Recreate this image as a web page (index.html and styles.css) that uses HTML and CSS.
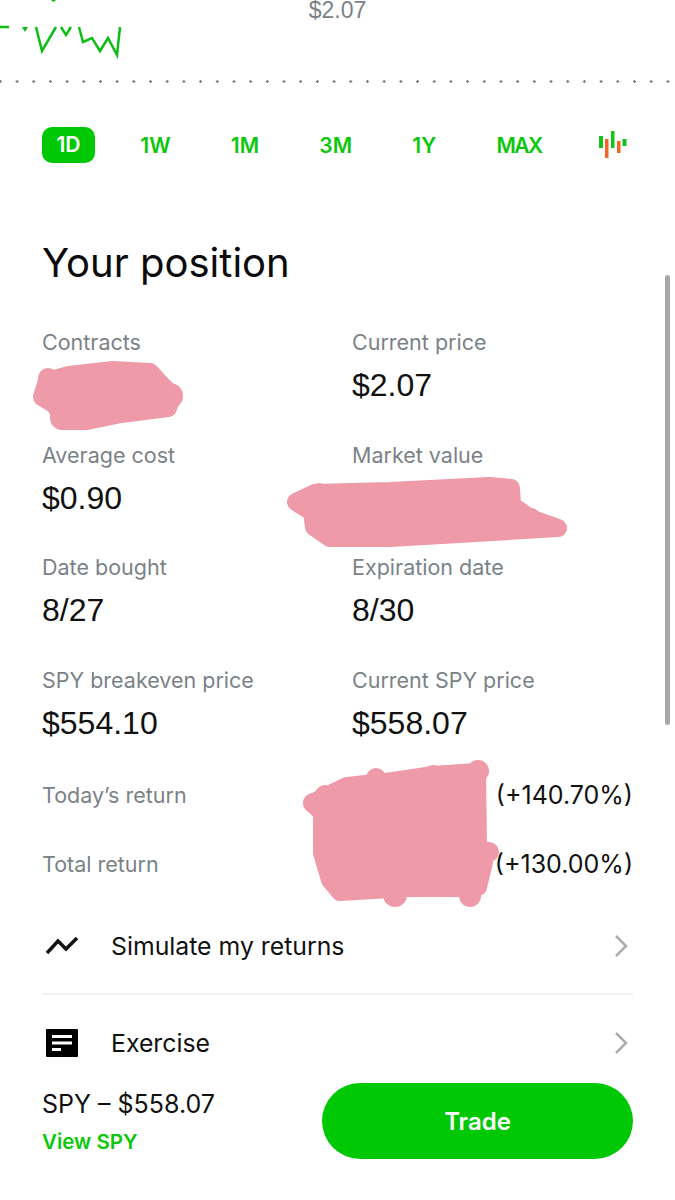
FILE: index.html
```html
<!DOCTYPE html>
<html lang="en">
<head>
    <meta charset="UTF-8">
    <meta name="viewport" content="width=device-width, initial-scale=1.0">
    <title>Your position</title>
    <link rel="stylesheet" href="styles.css">
</head>
<body>
    <div class="chart-top">
        <svg class="chart" width="130" height="60" viewBox="0 0 130 60">
            <path class="chart-line" d="M0 27H9M36 27L42 51L56 27M61 27L66 35L71 27M79 27L83 42L92 38L100 51L108 38L117 55L120 27"/>
            <path class="chart-dot" d="M22 27H28L25 32ZM51 0H56L53.500 2Z"/>
        </svg>
        <div class="chart-price">$2.07</div>
    </div>
    <div class="dots"></div>

    <div class="periods">
        <span class="period active">1D</span>
        <span class="period">1W</span>
        <span class="period">1M</span>
        <span class="period">3M</span>
        <span class="period">1Y</span>
        <span class="period max">MAX</span>
        <svg width="28" height="28" viewBox="0 0 28 28">
            <rect class="bar-green" x="0" y="5" width="4" height="12"/>
            <rect class="bar-orange" x="6" y="8" width="3.500" height="19"/>
            <rect class="bar-green" x="12" y="0" width="3.500" height="17"/>
            <rect class="bar-orange" x="18" y="10" width="3.500" height="12"/>
            <rect class="bar-green" x="23.500" y="8" width="4" height="7"/>
        </svg>
    </div>

    <h1 class="title">Your position</h1>

    <div class="stats">
        <div class="stat">
            <div class="stat-label">Contracts</div>
            <div class="stat-value"></div>
        </div>
        <div class="stat">
            <div class="stat-label">Current price</div>
            <div class="stat-value">$2.07</div>
        </div>
        <div class="stat">
            <div class="stat-label">Average cost</div>
            <div class="stat-value">$0.90</div>
        </div>
        <div class="stat">
            <div class="stat-label">Market value</div>
            <div class="stat-value"></div>
        </div>
        <div class="stat">
            <div class="stat-label">Date bought</div>
            <div class="stat-value">8/27</div>
        </div>
        <div class="stat">
            <div class="stat-label">Expiration date</div>
            <div class="stat-value">8/30</div>
        </div>
        <div class="stat">
            <div class="stat-label">SPY breakeven price</div>
            <div class="stat-value">$554.10</div>
        </div>
        <div class="stat">
            <div class="stat-label">Current SPY price</div>
            <div class="stat-value">$558.07</div>
        </div>
    </div>

    <div class="returns">
        <div class="return-row">
            <span class="stat-label">Today’s return</span>
            <span class="return-value">(+140.70%)</span>
        </div>
        <div class="return-row">
            <span class="stat-label">Total return</span>
            <span class="return-value">(+130.00%)</span>
        </div>
    </div>

    <div class="menu">
        <div class="menu-row divided">
            <svg class="menu-icon" width="34" height="20" viewBox="0 0 34 20">
                <path class="icon-line" d="M2 17L13 5L21 13L32 2"/>
            </svg>
            <span class="menu-text">Simulate my returns</span>
            <svg class="chevron" width="14" height="22" viewBox="0 0 14 22">
                <path d="M2 1L12 11L2 21"/>
            </svg>
        </div>
        <div class="menu-row last">
            <svg class="menu-icon" width="34" height="28" viewBox="0 0 34 28">
                <rect x="1" y="0" width="32" height="28" rx="1"/>
                <rect class="icon-cut" x="7" y="6" width="20" height="3"/>
                <rect class="icon-cut" x="7" y="12.500" width="20" height="3"/>
                <rect class="icon-cut" x="7" y="19" width="9" height="3"/>
            </svg>
            <span class="menu-text">Exercise</span>
            <svg class="chevron" width="14" height="22" viewBox="0 0 14 22">
                <path d="M2 1L12 11L2 21"/>
            </svg>
        </div>
    </div>

    <div class="footer">
        <div class="footer-info">
            <div class="footer-price">SPY – $558.07</div>
            <div class="footer-link">View SPY</div>
        </div>
        <button class="trade">Trade</button>
    </div>

    <div class="scrollbar"></div>

    <!-- hand drawn redactions on top of the screenshot -->
    <svg class="scribbles" width="675" height="1200" viewBox="0 0 675 1200">
        <path d="M47 381L69 375L113 370L150 372L162 385L172 395L168 408L121 414L87 421L64 421L55 405L42 397Z"/>
        <circle cx="62" cy="418" r="12"/>
        <circle cx="48" cy="378" r="10"/>
        <circle cx="170" cy="396" r="13"/>
        <path d="M296 502L315 493L390 491L489 486L511 488L512 505L530 518L558 528L476 533L390 538L330 538L314 527L312 512Z"/>
        <circle cx="319" cy="493" r="10"/>
        <circle cx="531" cy="518" r="10"/>
        <path d="M312 803L328 795L347 786L393 781L433 775L477 772L478 842L484 862L478 887L460 888L407 888L340 892L330 880L322 853L322 813Z"/>
        <circle cx="313" cy="803" r="10"/>
        <circle cx="325" cy="795" r="10"/>
        <circle cx="376" cy="778" r="10"/>
        <circle cx="433" cy="775" r="10"/>
        <circle cx="478" cy="771" r="11"/>
        <circle cx="489" cy="852" r="10"/>
        <circle cx="395" cy="895" r="12"/>
        <circle cx="470" cy="896" r="11"/>
    </svg>
</body>
</html>
```

FILE: styles.css
```css
* {
    box-sizing: border-box;
}
body {
    font-family: Inter, "Liberation Sans", sans-serif;
    position: relative;
    width: 675px;
    height: 1200px;
    margin: 0;
    overflow: hidden;
    background-color: white;
    color: #111;
}
.chart-top {
    display: grid;
    grid-template-columns: 1fr auto 1fr;
    height: 80px;
}
.chart-line {
    fill: none;
    stroke: #0dbf14;
    stroke-width: 2.500;
}
.chart-dot {
    fill: #0dbf14;
}
.chart-price {
    font-family: "Liberation Sans", sans-serif;
    font-size: 23px;
    line-height: 21px;
    color: #7b8287;
}
.dots {
    height: 3px;
    background-image: radial-gradient(circle, #777 1px, transparent 1.500px);
    background-size: 16.700px 3px;
    background-position: -8px 0;
}
.periods {
    display: flex;
    align-items: center;
    justify-content: space-between;
    height: 36px;
    margin-top: 44px;
    padding: 0 48px 0 42px;
}
.period {
    font-size: 21px;
    font-weight: 600;
    color: #0cc70c;
}
.period.max {
    margin-right: -3px;
    letter-spacing: -1.500px;
}
.period.active {
    margin-right: -15px;
    width: 53px;
    height: 36px;
    line-height: 36px;
    text-align: center;
    border-radius: 10px;
    background-color: #00c805;
    color: white;
}
.bar-green {
    fill: #12c41a;
}
.bar-orange {
    fill: #f0652a;
}
.title {
    height: 46px;
    margin: 77px 0 0 42px;
    font-size: 40px;
    line-height: 46px;
    font-weight: 400;
    color: #0b0b0b;
}
.stats {
    display: grid;
    grid-template-columns: 310px 1fr;
    row-gap: 33.700px;
    margin: 42px 0 0 42px;
}
.stat-label {
    font-size: 21.500px;
    line-height: 28px;
    color: #7b8287;
}
.stat-value {
    height: 43px;
    margin-top: 8px;
    font-family: "Liberation Sans", sans-serif;
    font-size: 32px;
    line-height: 43px;
}
.returns {
    display: flex;
    flex-direction: column;
    gap: 39px;
    margin: 35px 42px 0;
}
.return-row {
    display: flex;
    justify-content: space-between;
    height: 30px;
    line-height: 30px;
}
.return-row .stat-label {
    line-height: 30px;
}
.return-value {
    font-size: 25px;
    line-height: 30px;
}
.menu {
    margin: 19px 42px 0;
}
.menu-row {
    display: flex;
    align-items: center;
    height: 96px;
    padding: 20px 0;
}
.menu-row.divided {
    height: 97px;
    border-bottom: 2px solid #f1f2f3;
}
.menu-row.last {
    height: 76px;
    padding-bottom: 0;
}
.menu-icon {
    flex: none;
    margin: 0 32px 0 3px;
}
.icon-line {
    fill: none;
    stroke: #111;
    stroke-width: 3.500;
}
.icon-cut {
    fill: white;
}
.menu-text {
    flex: 1;
    font-size: 24.800px;
}
.chevron {
    margin-right: 5px;
    fill: none;
    stroke: #a9aeb2;
    stroke-width: 2.500;
}
.footer {
    display: flex;
    align-items: center;
    justify-content: space-between;
    margin: 12px 42px 0;
}
.footer-price {
    font-size: 25px;
    line-height: 32px;
}
.footer-link {
    margin-top: 9px;
    font-size: 20.500px;
    line-height: 26px;
    font-weight: 600;
    color: #0cc70c;
}
.trade {
    width: 311px;
    height: 76px;
    padding-top: 2px;
    border: none;
    border-radius: 38px;
    background-color: #00c805;
    color: white;
    font-family: inherit;
    font-size: 24px;
    font-weight: 600;
}
.scrollbar {
    position: absolute;
    left: 665px;
    top: 275px;
    width: 5px;
    height: 450px;
    border-radius: 3px;
    background-color: #a8a8a8;
}
.scribbles {
    position: absolute;
    left: 0;
    top: 0;
    fill: #ee9aa9;
    stroke: #ee9aa9;
    stroke-width: 18;
    stroke-linejoin: round;
}
.scribbles circle {
    stroke: none;
}
```
